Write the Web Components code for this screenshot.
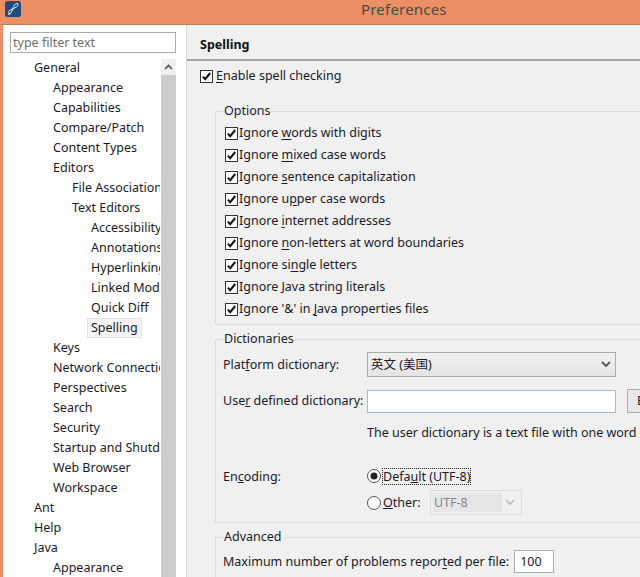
<!DOCTYPE html>
<html>
<head>
<meta charset="utf-8">
<title>Preferences</title>
<style>
    html, body { margin: 0; height: 100%; overflow: hidden; background: #f0f0f0; }
    body { font: 12.5px/20px "Noto Sans", "Noto Sans CJK SC", sans-serif; color: #1a1a2a; }
    u { text-underline-offset: 2px; }
</style>
</head>
<body>
<pref-window>
    <pref-tree slot="nav">
        <tree-item level="1">General</tree-item>
        <tree-item level="2">Appearance</tree-item>
        <tree-item level="2">Capabilities</tree-item>
        <tree-item level="2">Compare/Patch</tree-item>
        <tree-item level="2">Content Types</tree-item>
        <tree-item level="2">Editors</tree-item>
        <tree-item level="3">File Associations</tree-item>
        <tree-item level="3">Text Editors</tree-item>
        <tree-item level="4">Accessibility</tree-item>
        <tree-item level="4">Annotations</tree-item>
        <tree-item level="4">Hyperlinking</tree-item>
        <tree-item level="4">Linked Mode</tree-item>
        <tree-item level="4">Quick Diff</tree-item>
        <tree-item level="4" selected>Spelling</tree-item>
        <tree-item level="2">Keys</tree-item>
        <tree-item level="2">Network Connections</tree-item>
        <tree-item level="2">Perspectives</tree-item>
        <tree-item level="2">Search</tree-item>
        <tree-item level="2">Security</tree-item>
        <tree-item level="2">Startup and Shutdown</tree-item>
        <tree-item level="2">Web Browser</tree-item>
        <tree-item level="2">Workspace</tree-item>
        <tree-item level="1">Ant</tree-item>
        <tree-item level="1">Help</tree-item>
        <tree-item level="1">Java</tree-item>
        <tree-item level="2">Appearance</tree-item>
    </pref-tree>

    <pref-page slot="page" heading="Spelling">
        <pref-check class="enable"><u>E</u>nable spell checking</pref-check>

        <pref-group legend="Options" class="options">
            <pref-check>Ignore <u>w</u>ords with digits</pref-check>
            <pref-check>Ignore <u>m</u>ixed case words</pref-check>
            <pref-check>Ignore <u>s</u>entence capitalization</pref-check>
            <pref-check>Ignore u<u>p</u>per case words</pref-check>
            <pref-check>Ignore <u>i</u>nternet addresses</pref-check>
            <pref-check>Ignore <u>n</u>on-letters at word boundaries</pref-check>
            <pref-check>Ignore si<u>n</u>gle letters</pref-check>
            <pref-check>Ignore Java string literals</pref-check>
            <pref-check>Ignore '&amp;' in <u>J</u>ava properties files</pref-check>
        </pref-group>

        <pref-group legend="Dictionaries" class="dictionaries">
            <dict-form></dict-form>
        </pref-group>

        <pref-group legend="Advanced" class="advanced">
            <limit-row>Maximum number of problems repor<u>t</u>ed per file:</limit-row>
        </pref-group>
    </pref-page>
</pref-window>

<script>
const windowTemplate = document.createElement('template');
windowTemplate.innerHTML = `
    <style>
        :host { display: flex; flex-direction: column; width: 640px; height: 577px; overflow: hidden; }
        .title {
            flex: none;
            display: flex;
            align-items: flex-start;
            height: 24px;
            padding-left: 5px;
            background: #eb8f65;
            border-bottom: 1px solid #c97a55;
        }
        .title svg { flex: none; margin-top: 1px; }
        .title span {
            margin-left: 340px;
            font-size: 15px;
            line-height: 18px;
            letter-spacing: 0.2px;
            color: #4d4a4d;
        }
        .body { flex: 1; display: flex; min-height: 0; border-left: 3px solid #eb8f65; }
        .nav { flex: none; width: 183px; background: #fff; border-right: 1px solid #d8d8d8; }
        .page { flex: 1; min-width: 0; background: #f0f0f0; }
    </style>
    <div class="title">
        <svg width="16" height="16" viewBox="0 0 16 16">
            <rect width="16" height="16" rx="2.5" fill="#234a78"/>
            <path d="M3 13.5C6 13.5 6.5 11 7.5 8.5C8.5 6 9.5 2.5 12 2.5C13.5 2.5 13.5 4.5 11.5 6C9.5 7.5 6.5 8 4.5 9.5C3 10.7 3.5 12.5 5 12.5" fill="none" stroke="#f2f5f8" stroke-width="1"/>
        </svg>
        <span>Preferences</span>
    </div>
    <div class="body">
        <div class="nav"><slot name="nav"></slot></div>
        <div class="page"><slot name="page"></slot></div>
    </div>
`;

class PrefWindow extends HTMLElement {
    constructor() {
        super();
        this.attachShadow({ mode: 'open' });
        this.shadowRoot.appendChild(windowTemplate.content.cloneNode(true));
    }
}

const treeTemplate = document.createElement('template');
treeTemplate.innerHTML = `
    <style>
        :host { display: block; padding: 7px 10px 0 7px; }
        .filter {
            box-sizing: border-box;
            display: block;
            width: 166px;
            height: 21px;
            padding: 0 2px;
            border: 1px solid #a9a9a9;
            background: #fff;
            font: inherit;
            color: #6d6d6d;
            outline: none;
        }
        .filter::placeholder { color: #6d6d6d; opacity: 1; }
        .tree { display: flex; width: 166px; height: 520px; margin-top: 6px; }
        .items { flex: none; width: 150px; overflow: hidden; margin-top: -1px; }
        .bar { flex: none; width: 15px; margin-left: 1px; display: flex; flex-direction: column; background: #cdcdcd; }
        .arrow { flex: none; height: 16px; display: flex; align-items: center; justify-content: center; background: #f0f0f0; }
    </style>
    <input class="filter" placeholder="type filter text">
    <div class="tree">
        <div class="items"><slot></slot></div>
        <div class="bar">
            <div class="arrow">
                <svg width="9" height="6" viewBox="0 0 9 6"><path d="M1 5L4.5 1.5L8 5" fill="none" stroke="#505050" stroke-width="1.6"/></svg>
            </div>
        </div>
    </div>
`;

class PrefTree extends HTMLElement {
    constructor() {
        super();
        this.attachShadow({ mode: 'open' });
        this.shadowRoot.appendChild(treeTemplate.content.cloneNode(true));
    }
}

const itemTemplate = document.createElement('template');
itemTemplate.innerHTML = `
    <style>
        :host { display: block; height: 20px; white-space: nowrap; }
        span { display: inline-block; height: 19px; line-height: 19px; padding: 0 3px; border: 1px solid transparent; border-width: 0 1px 1px; }
        :host([selected]) span { background: #f3f3f3; border: 1px solid #e2e2e2; height: 18px; line-height: 18px; }
    </style>
    <span><slot></slot></span>
`;

class TreeItem extends HTMLElement {
    constructor() {
        super();
        this.attachShadow({ mode: 'open' });
        this.shadowRoot.appendChild(itemTemplate.content.cloneNode(true));
    }

    connectedCallback() {
        const level = Number(this.getAttribute('level'));
        const indents = [20, 39, 58, 77];
        this.style.paddingLeft = `${indents[level - 1]}px`;
    }
}

const pageTemplate = document.createElement('template');
pageTemplate.innerHTML = `
    <style>
        :host { display: block; width: 560px; }
        h1 {
            margin: 0;
            height: 36px;
            box-sizing: border-box;
            padding: 10px 0 0 13px;
            font-size: 12.5px;
            line-height: 20px;
            font-weight: 700;
            color: #111;
            border-bottom: 2px solid #a8a8a8;
        }
    </style>
    <h1></h1>
    <div><slot></slot></div>
`;

class PrefPage extends HTMLElement {
    constructor() {
        super();
        this.attachShadow({ mode: 'open' });
        this.shadowRoot.appendChild(pageTemplate.content.cloneNode(true));
        this.shadowRoot.querySelector('h1').textContent = this.getAttribute('heading');
    }
}

const checkTemplate = document.createElement('template');
checkTemplate.innerHTML = `
    <style>
        :host { display: flex; align-items: center; gap: 1px; height: 22px; white-space: nowrap; }
        :host(.enable) { gap: 3px; margin: 4px 0 0 13px; }
        svg { flex: none; }
    </style>
    <svg width="13" height="13" viewBox="0 0 13 13">
        <rect x="0.5" y="0.5" width="12" height="12" fill="#fff" stroke="#333"/>
        <path d="M2.8 6.6L5.2 9.2L10.2 3" fill="none" stroke="#111" stroke-width="2"/>
    </svg>
    <span><slot></slot></span>
`;

class PrefCheck extends HTMLElement {
    constructor() {
        super();
        this.attachShadow({ mode: 'open' });
        this.shadowRoot.appendChild(checkTemplate.content.cloneNode(true));
    }
}

const groupTemplate = document.createElement('template');
groupTemplate.innerHTML = `
    <style>
        :host { display: block; margin-left: 28px; }
        :host(.options) { margin-top: 14px; }
        :host(.dictionaries), :host(.advanced) { margin-top: 4px; }
        fieldset { margin: 0; padding: 3px 8px 0 7px; border: 1px solid #dcdcdc; min-width: 0; box-sizing: border-box; }
        legend { padding: 0 1px; line-height: 20px; }
        :host(.options) fieldset { height: 224px; padding: 1px 8px 0 9px; }
        :host(.options) legend { margin-left: -2px; }
        :host(.dictionaries) fieldset { height: 194px; }
        :host(.advanced) fieldset { height: 60px; }
    </style>
    <fieldset>
        <legend></legend>
        <slot></slot>
    </fieldset>
`;

class PrefGroup extends HTMLElement {
    constructor() {
        super();
        this.attachShadow({ mode: 'open' });
        this.shadowRoot.appendChild(groupTemplate.content.cloneNode(true));
        this.shadowRoot.querySelector('legend').textContent = this.getAttribute('legend');
    }
}

const formTemplate = document.createElement('template');
formTemplate.innerHTML = `
    <style>
        :host { display: block; }
        .form { display: grid; grid-template-columns: 144px 249px 11px 30px; align-items: center; white-space: nowrap; }
        .combo {
            box-sizing: border-box;
            height: 25px;
            display: flex;
            align-items: center;
            justify-content: space-between;
            padding: 0 4px 0 3px;
            border: 1px solid #acacac;
            background: linear-gradient(#f0f0f0, #e5e5e5);
        }
        .field { box-sizing: border-box; height: 23px; border: 1px solid #9dbce0; background: #fff; }
        .button { box-sizing: border-box; width: 30px; height: 24px; border: 1px solid #acacac; background: #e8e8e8; padding-left: 9px; line-height: 22px; overflow: hidden; }
        .user { margin-top: 12px; }
        .note { grid-column: 2 / 5; margin-top: 10px; width: 400px; overflow: hidden; }
        .encoding { margin: 24px 0 -1px; }
        .radio { display: flex; align-items: center; gap: 1px; }
        .default { margin-top: 23px; }
        .default span { outline: 1px dotted #222; outline-offset: -1px; line-height: 17px; padding: 0 1px; }
        .other { grid-column: 2; margin-top: 4px; }
        .other span { width: 46px; margin-left: 1px; }
        .small {
            box-sizing: border-box;
            width: 92px;
            height: 25px;
            display: flex;
            align-items: center;
            justify-content: space-between;
            padding: 0 6px 0 2px;
            border: 1px solid #dcdcdc;
            background: #f0f0f0;
            color: #858585;
        }
        .small b { font-weight: 400; width: 68px; padding-left: 1px; background: #e6e6e6; line-height: 19px; }
    </style>
    <div class="form">
        <div>Plat<u>f</u>orm dictionary:</div>
        <div class="combo">
            <span>英文 (美国)</span>
            <svg width="10" height="7" viewBox="0 0 10 7"><path d="M1 1L5 5L9 1" fill="none" stroke="#555" stroke-width="1.8"/></svg>
        </div>
        <div></div><div></div>

        <div class="user">Use<u>r</u> defined dictionary:</div>
        <div class="field user"></div>
        <div></div>
        <div class="button user">B</div>

        <div></div>
        <div class="note">The user dictionary is a text file with one word on each line</div>

        <div class="encoding">En<u>c</u>oding:</div>
        <div class="radio default">
            <svg width="14" height="14" viewBox="0 0 14 14">
                <circle cx="7" cy="7" r="6.5" fill="#fff" stroke="#555"/>
                <circle cx="7" cy="7" r="3.5" fill="#222"/>
            </svg>
            <span>Defa<u>u</u>lt (UTF-8)</span>
        </div>
        <div></div><div></div>

        <div class="radio other">
            <svg width="14" height="14" viewBox="0 0 14 14">
                <circle cx="7" cy="7" r="6.5" fill="#fff" stroke="#555"/>
            </svg>
            <span><u>O</u>ther:</span>
            <div class="small">
                <b>UTF-8</b>
                <svg width="10" height="7" viewBox="0 0 10 7"><path d="M1 1L5 5L9 1" fill="none" stroke="#bbb" stroke-width="1.6"/></svg>
            </div>
        </div>
    </div>
`;

class DictForm extends HTMLElement {
    constructor() {
        super();
        this.attachShadow({ mode: 'open' });
        this.shadowRoot.appendChild(formTemplate.content.cloneNode(true));
    }
}

const limitTemplate = document.createElement('template');
limitTemplate.innerHTML = `
    <style>
        :host { display: flex; align-items: center; gap: 5px; white-space: nowrap; }
        .value { box-sizing: border-box; width: 40px; height: 23px; padding-left: 5px; line-height: 21px; background: #fff; border: 1px solid #acacac; }
    </style>
    <span><slot></slot></span>
    <div class="value">100</div>
`;

class LimitRow extends HTMLElement {
    constructor() {
        super();
        this.attachShadow({ mode: 'open' });
        this.shadowRoot.appendChild(limitTemplate.content.cloneNode(true));
    }
}

customElements.define('pref-window', PrefWindow);
customElements.define('pref-tree', PrefTree);
customElements.define('tree-item', TreeItem);
customElements.define('pref-page', PrefPage);
customElements.define('pref-check', PrefCheck);
customElements.define('pref-group', PrefGroup);
customElements.define('dict-form', DictForm);
customElements.define('limit-row', LimitRow);
</script>
</body>
</html>
